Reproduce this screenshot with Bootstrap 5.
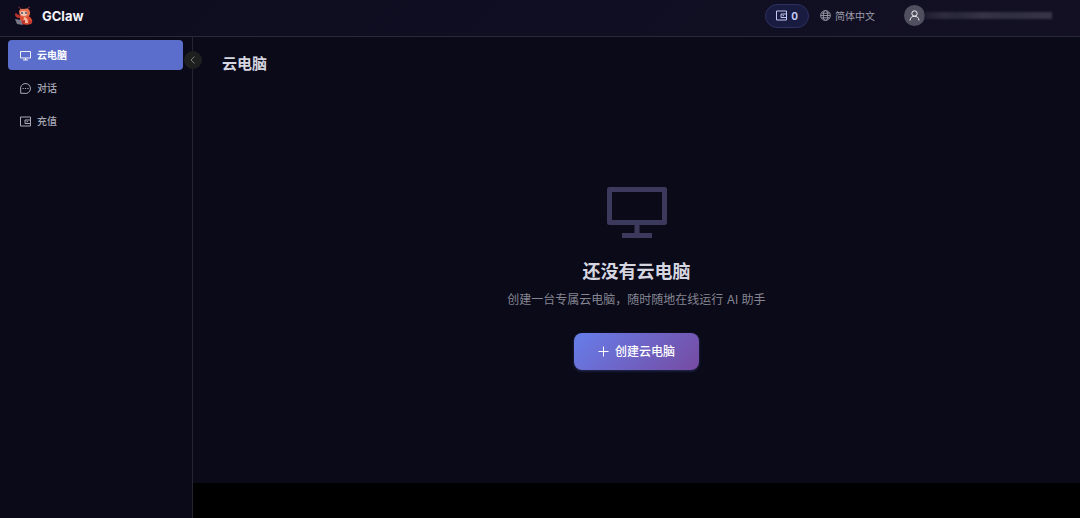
<!DOCTYPE html>
<html lang="zh-CN" data-bs-theme="dark">
<head>
<meta charset="utf-8">
<meta name="viewport" content="width=device-width, initial-scale=1">
<title>GClaw</title>
<link href="https://cdn.jsdelivr.net/npm/bootstrap@5.3.0/dist/css/bootstrap.min.css" rel="stylesheet">
<style>
  body { background: #000; color: #dcdce6; font-family: Inter, "Noto Sans CJK SC", sans-serif; font-size: 10px; line-height: 16px; }
  svg { display: block; flex: none; }
  .topbar { height: 37px; padding: 0 28px 5px 14px; background: linear-gradient(135deg, #0d0c1f, #131024); border-bottom: 1px solid #2a2938; }
  .brand { gap: 8px; font-size: 13px; font-weight: 700; color: #f4f4fa; }
  .credit { height: 24px; padding: 0 10px; gap: 4px; font-size: 10px; font-weight: 700; line-height: 16px; color: #c3c8f4; background: #191b40; border: 1px solid #2b3160; border-radius: 12px; }
  .credit:hover { background: #222552; color: #fff; }
  .lang { gap: 4px; margin: 0 29px 0 11px; color: #9c9caa; font-size: 10px; line-height: 16px; }
  .avatar { width: 21px; height: 21px; background: #504f5f; color: #f0f0f5; }
  .account-mask { width: 127px; height: 7px; background: linear-gradient(90deg, #201e30, #2e2c3e 15%, #29273a 25%, #353345 45%, #302e41 65%, #373547); filter: blur(1px); }
  .sidebar { width: 193px; padding: 3px 9px 0 8px; background: #0a0a18; border-right: 1px solid #252433; }
  .menu { gap: 3px; }
  .menu a { height: 30px; padding: 0 12px; gap: 6px; font-size: 10px; font-weight: 500; color: #a9a9b6; border-radius: 4px; }
  .menu a.active { background: #5c6ecb; color: #fff; font-weight: 700; }
  .collapse-btn { top: 14px; right: -10px; width: 18px; height: 18px; background: #1d201f; color: #777b76; z-index: 2; }
  .content-col { padding-bottom: 35px; }
  main { background: #0a0a18; padding: 16px 29px; }
  main h1 { font-size: 15px; line-height: 22px; font-weight: 700; color: #d6d6e0; }
  .empty { padding-top: 4px; }
  .empty h2 { font-size: 18px; line-height: 26px; font-weight: 700; color: #d6d6e0; margin: 11px 0 6px; }
  .empty p { font-size: 12px; line-height: 18px; color: #858592; margin: 0 0 24px; }
  .create { height: 37px; padding: 0 24px; gap: 6px; font-size: 12px; font-weight: 500; color: #fff; border: 0; border-radius: 8px; background: linear-gradient(135deg, #667eea, #764ba2); box-shadow: 0 1px 3px #667eea55; }
</style>
</head>
<body>
<div class="min-vh-100 d-flex flex-column">
  <header class="topbar d-flex align-items-center">
    <a href="#" class="brand d-flex align-items-center text-decoration-none">
      <svg width="20" height="20" viewBox="0 0 20 20" aria-hidden="true">
        <path d="M7 4Q6 1 4.500 1M13 4Q14 1 16 1" fill="none" stroke="#8a3340" stroke-width="1"/>
        <path d="M5 12Q1 12 1 8Q2 6 3 8L5 9Q7 9 6 12Z" fill="#b7322c"/>
        <path d="M6 9Q12 7 16 11Q20 15 17 18Q11 20 6 17Z" fill="#dc4b32"/>
        <path d="M10 11Q14 11 14 17L9 17Z" fill="#f2b79c"/>
        <path d="M5 5Q6 2 10 3Q15 1 16 6Q17 11 11 11Q5 11 5 5Z" fill="#e6704d"/>
        <path d="M6 6Q9 4 13 6Q14 10 10 10Q6 10 6 6Z" fill="#f4c4b0"/>
        <circle cx="8" cy="7" r="1" fill="#435574"/><circle cx="12" cy="7" r="1" fill="#435574"/>
        <path d="M1 13L7 14L9 19L3 18Z" fill="#777988"/>
        <path d="M8 15L11 14L11 17L8 18ZM15 14L18 16L15 18Z" fill="#b72e2a"/>
      </svg>
      <span>GClaw</span>
    </a>
    <button type="button" class="credit btn d-flex align-items-center ms-auto">
      <svg width="11" height="11" viewBox="0 0 11 11" fill="none" stroke="currentColor" aria-hidden="true"><path d="M.5 1h10v9H.5zM10.500 4H5v3.500h5.500M6.500 5.700h1.500"/></svg>
      <span>0</span>
    </button>
    <button type="button" class="lang btn border-0 p-0 d-flex align-items-center">
      <svg width="11" height="11" viewBox="0 0 12 12" fill="none" stroke="currentColor" aria-hidden="true"><circle cx="6" cy="6" r="5.300"/><ellipse cx="6" cy="6" rx="2.400" ry="5.300"/><path d="M.7 6h10.600M1.700 3.500h8.600M1.700 8.500h8.600"/></svg>
      <span>简体中文</span>
    </button>
    <button type="button" class="btn border-0 p-0 d-flex align-items-center" aria-label="账户">
      <span class="avatar rounded-circle d-flex align-items-center justify-content-center">
        <svg width="11" height="11" viewBox="0 0 11 11" fill="none" stroke="currentColor" aria-hidden="true"><circle cx="5.500" cy="3.500" r="2.700"/><path d="M1 10.500C1.200 7.700 3 6.200 5.500 6.200S9.800 7.700 10 10.500"/></svg>
      </span>
      <span class="account-mask"></span>
    </button>
  </header>
  <div class="d-flex flex-grow-1">
    <aside class="sidebar position-relative flex-shrink-0">
      <nav class="menu nav flex-column">
        <a href="#" class="active d-flex align-items-center text-decoration-none" aria-current="page">
          <svg width="11" height="11" viewBox="0 0 11 11" fill="none" stroke="currentColor" stroke-width=".9" aria-hidden="true"><path d="M.5 1.500h10v6.500H.5zM5.500 8v2M3 10h5"/></svg>
          <span>云电脑</span>
        </a>
        <a href="#" class="d-flex align-items-center text-decoration-none">
          <svg width="11" height="11" viewBox="0 0 11 11" fill="none" stroke="currentColor" aria-hidden="true"><path d="M.7 10.300V7A5 5 0 1 1 4 10.300Z"/><path d="M2.500 5.500h1.200M4.900 5.500h1.200M7.300 5.500h1.200" stroke-width="1.200"/></svg>
          <span>对话</span>
        </a>
        <a href="#" class="d-flex align-items-center text-decoration-none">
          <svg width="11" height="11" viewBox="0 0 11 11" fill="none" stroke="currentColor" aria-hidden="true"><path d="M.5 1h10v9H.5zM10.500 4H5v3.500h5.500M6.500 5.700h1.500"/></svg>
          <span>充值</span>
        </a>
      </nav>
      <button type="button" class="collapse-btn btn border-0 rounded-circle p-0 position-absolute d-flex align-items-center justify-content-center" aria-label="收起菜单">
        <svg width="8" height="8" viewBox="0 0 8 8" fill="none" stroke="currentColor" aria-hidden="true"><path d="M5.500 .5L2 4L5.500 7.500"/></svg>
      </button>
    </aside>
    <div class="content-col d-flex flex-grow-1">
      <main class="flex-grow-1 d-flex flex-column">
        <h1 class="m-0">云电脑</h1>
        <section class="empty flex-grow-1 d-flex flex-column align-items-center justify-content-center text-center">
          <svg width="72" height="72" viewBox="0 0 72 72" fill="none" stroke="#3c3a5c" stroke-width="5" stroke-linejoin="round" aria-hidden="true"><path d="M8.500 13.500h55v33h-55zM36 47v12M21 59.500h30"/></svg>
          <h2>还没有云电脑</h2>
          <p>创建一台专属云电脑，随时随地在线运行 AI 助手</p>
          <button type="button" class="create btn d-flex align-items-center">
            <svg width="11" height="11" viewBox="0 0 11 11" fill="none" stroke="currentColor" aria-hidden="true"><path d="M5.500 .5v10M.5 5.500h10"/></svg>
            <span>创建云电脑</span>
          </button>
        </section>
      </main>
    </div>
  </div>
</div>
<script src="https://cdn.jsdelivr.net/npm/bootstrap@5.3.0/dist/js/bootstrap.bundle.min.js"></script>
</body>
</html>
